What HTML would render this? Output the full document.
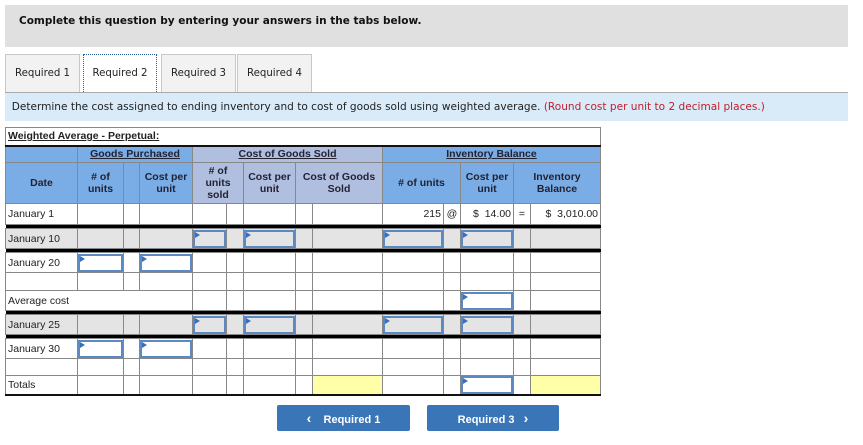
<!DOCTYPE html>
<html><head><meta charset="utf-8"><style>
body{margin:0;width:863px;height:445px;background:#fff;position:relative;overflow:hidden;font-family:"DejaVu Sans",Verdana,sans-serif;}
.top{position:absolute;left:5px;top:5px;width:843px;height:42px;background:#e0e0e0;}
.top b{position:absolute;left:14px;top:10px;font-size:10.5px;color:#111;}
.tab{position:absolute;top:54px;height:38px;background:#f2f2f2;border:1px solid #c8c8c8;border-bottom:none;box-sizing:border-box;font-size:10.2px;color:#222;text-align:center;line-height:38px;}
.tab.act{background:#fff;border:1px dotted #2a5aa0;border-bottom:none;}
.line{position:absolute;left:5px;top:92px;width:843px;height:1px;background:#aaa;}
.inst{position:absolute;left:5px;top:93px;width:843px;height:28px;background:#d9ebf9;font-size:10.55px;color:#222;line-height:28px;}
.inst span{color:#c0202a;}
table{position:absolute;left:5px;top:127px;border-collapse:collapse;table-layout:fixed;font-family:"Liberation Sans",Arial,sans-serif;font-size:10.5px;color:#222;}
td{border:1px solid #888;padding:0;overflow:hidden;white-space:nowrap;}
.ttl td{border-bottom:2px solid #111;font-weight:bold;padding-left:2px;text-decoration:underline;font-size:10.5px;}
.h td{text-align:center;font-weight:bold;color:#223;line-height:12px;white-space:normal;}
.bl{background:#7aade6;}
.pu{background:#b0bfdf;}
.u{text-decoration:underline;}
.bar td{background:#000;border-left:none;border-right:none;height:3px;}
.g td{background:#e4e4e4;}
.lab{padding-left:2px;}
.in{position:relative;box-sizing:border-box;border:2px solid #5b89c4;height:18px;margin:0 0 0 0;}
.g .in{background:#e4e4e4;}
.in:before{content:"";position:absolute;left:0;top:0;border-top:3px solid transparent;border-bottom:3px solid transparent;border-left:5px solid #3a6fc0;}
.y{background:#ffffa8;}
.r{text-align:right;padding-right:2px;}
.c{text-align:center;}
.btn{position:absolute;top:405px;height:26px;background:#3a75b8;border-radius:2px;color:#fff;font-family:"Liberation Sans",Arial,sans-serif;font-weight:bold;font-size:11px;line-height:26px;text-align:center;}
.btn i{font-style:normal;font-size:14px;}
</style></head><body>
<div class="top"><b>Complete this question by entering your answers in the tabs below.</b></div>
<div class="tab" style="left:5px;width:75px">Required 1</div>
<div class="tab act" style="left:83px;width:74px">Required 2</div>
<div class="tab" style="left:161px;width:75px">Required 3</div>
<div class="tab" style="left:237px;width:75px">Required 4</div>
<div class="line"></div>
<div class="inst">&nbsp;&nbsp;Determine the cost assigned to ending inventory and to cost of goods sold using weighted average. <span>(Round cost per unit to 2 decimal places.)</span></div>
<table>
<colgroup><col style="width:72px"><col style="width:46px"><col style="width:16px"><col style="width:53px"><col style="width:34px"><col style="width:17px"><col style="width:52px"><col style="width:17px"><col style="width:70px"><col style="width:61px"><col style="width:17px"><col style="width:53px"><col style="width:17px"><col style="width:70px"></colgroup>
<tr class="ttl" style="height:18px"><td colspan="14">Weighted Average - Perpetual:</td></tr>
<tr class="h" style="height:17px"><td class="bl"></td><td class="bl" colspan="3"><span class="u">Goods Purchased</span></td><td class="pu" colspan="5"><span class="u">Cost of Goods Sold</span></td><td class="bl" colspan="5"><span class="u">Inventory Balance</span></td></tr>
<tr class="h" style="height:41px"><td class="bl">Date</td><td class="bl">#&nbsp;of units</td><td class="bl"></td><td class="bl">Cost per unit</td><td class="pu" colspan="2">#&nbsp;of<br>units<br>sold</td><td class="pu">Cost per unit</td><td class="pu" colspan="2">Cost of Goods Sold</td><td class="bl" colspan="2"># of units</td><td class="bl">Cost per unit</td><td class="bl" colspan="2">Inventory Balance</td></tr>
<tr style="height:21px"><td class="lab">January 1</td><td></td><td></td><td></td><td></td><td></td><td></td><td></td><td></td><td class="r">215</td><td class="c">@</td><td class="r">$ &nbsp;14.00</td><td class="c">=</td><td class="r">$ &nbsp;3,010.00</td></tr>
<tr class="bar"><td colspan="14"></td></tr>
<tr class="g" style="height:20px"><td class="lab">January 10</td><td></td><td></td><td></td><td><div class="in"></div></td><td></td><td><div class="in"></div></td><td></td><td></td><td><div class="in"></div></td><td></td><td><div class="in"></div></td><td></td><td></td></tr>
<tr class="bar"><td colspan="14"></td></tr>
<tr style="height:20px"><td class="lab">January 20</td><td><div class="in"></div></td><td></td><td><div class="in"></div></td><td></td><td></td><td></td><td></td><td></td><td></td><td></td><td></td><td></td><td></td></tr>
<tr style="height:18px"><td></td><td></td><td></td><td></td><td></td><td></td><td></td><td></td><td></td><td></td><td></td><td></td><td></td><td></td></tr>
<tr style="height:20px"><td class="lab" colspan="4">Average cost</td><td></td><td></td><td></td><td></td><td></td><td></td><td></td><td><div class="in"></div></td><td></td><td></td></tr>
<tr class="bar"><td colspan="14"></td></tr>
<tr class="g" style="height:20px"><td class="lab">January 25</td><td></td><td></td><td></td><td><div class="in"></div></td><td></td><td><div class="in"></div></td><td></td><td></td><td><div class="in"></div></td><td></td><td><div class="in"></div></td><td></td><td></td></tr>
<tr class="bar"><td colspan="14"></td></tr>
<tr style="height:20px"><td class="lab">January 30</td><td><div class="in"></div></td><td></td><td><div class="in"></div></td><td></td><td></td><td></td><td></td><td></td><td></td><td></td><td></td><td></td><td></td></tr>
<tr style="height:17px"><td></td><td></td><td></td><td></td><td></td><td></td><td></td><td></td><td></td><td></td><td></td><td></td><td></td><td></td></tr>
<tr style="height:19px;border-bottom:2px solid #111"><td class="lab">Totals</td><td></td><td></td><td></td><td></td><td></td><td></td><td></td><td class="y"></td><td></td><td></td><td><div class="in"></div></td><td></td><td class="y"></td></tr>
</table>
<div class="btn" style="left:277px;width:133px"><i>&lsaquo;</i>&nbsp;&nbsp;&nbsp; Required 1</div>
<div class="btn" style="left:427px;width:132px">Required 3 &nbsp;&nbsp;<i>&rsaquo;</i></div>
</body></html>
